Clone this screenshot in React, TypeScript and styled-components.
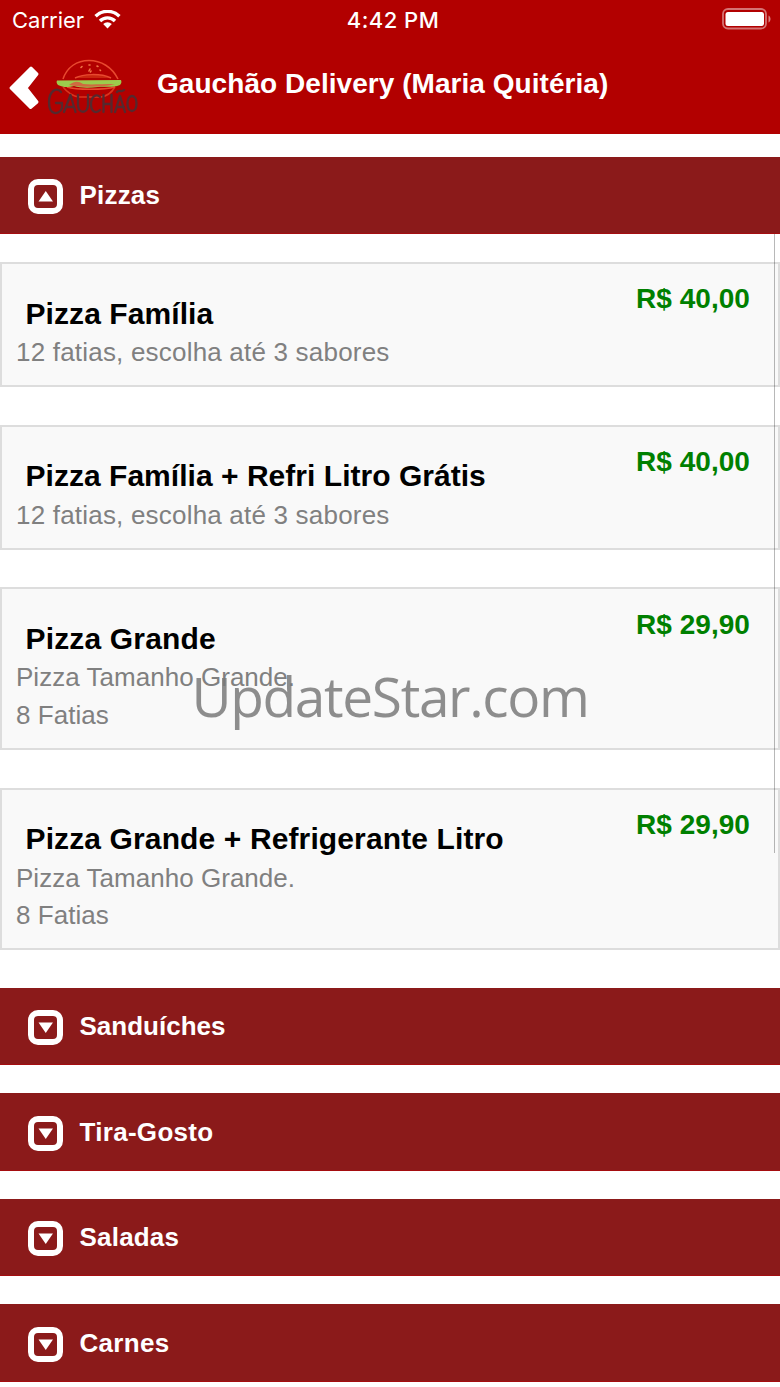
import React from "react";
import styled, { createGlobalStyle } from "styled-components";

const GlobalStyle = createGlobalStyle`
  * { box-sizing: border-box; }
  html, body { margin: 0; background: #fff; }
  body { font-family: "Liberation Sans", Arial, sans-serif; overflow: hidden; }
`;

const Screen = styled.div`
  position: relative;
  width: 780px;
  height: 1387px;
  overflow: hidden;
  background: #fff;
`;

const TopArea = styled.header`
  height: 133.5px;
  background: #b20000;
  color: #fff;
`;

const StatusBar = styled.div`
  display: grid;
  grid-template-columns: 1fr auto 1fr;
  align-items: center;
  height: 40px;
  padding: 0 9px 0 12px;
  font-family: Inter, sans-serif;
  font-size: 22px;
  line-height: 40px;
`;

const Carrier = styled.div`
  display: flex;
  align-items: center;
  gap: 10px;
  margin-top: -1px;
`;

const Clock = styled.div`
  font-weight: 500;
  letter-spacing: 0.45px;
  padding-left: 3px;
`;

const Battery = styled.svg`
  justify-self: end;
  margin-top: -2px;
`;

const NavBar = styled.div`
  display: flex;
  align-items: flex-start;
  height: 93px;
  padding-left: 8px;
`;

const BackIcon = styled.svg`
  margin-top: 24px;
`;

const Logo = styled.svg`
  margin: 16px 0 0 6px;
`;

const Title = styled.h1`
  margin: 24.5px 0 0 16px;
  font-size: 28px;
  line-height: 38px;
  font-weight: 700;
  letter-spacing: 0.05px;
  white-space: nowrap;
`;

const Menu = styled.main`
  display: flex;
  flex-direction: column;
  gap: 28px;
  padding-top: 23px;
`;

const SectionBar = styled.div`
  display: flex;
  align-items: center;
  height: 77.5px;
  padding-left: 28px;
  gap: 16.5px;
  background: #8b1a1a;
  border-bottom: 1px solid #a50d10;
  color: #fff;
`;

const ToggleIcon = styled.svg`
  margin-top: 3.5px;
`;

const SectionName = styled.h2<{ $tracking: number }>`
  margin: 0;
  font-size: 26px;
  line-height: 38px;
  font-weight: 700;
  letter-spacing: ${(p) => p.$tracking}px;
`;

const Items = styled.div`
  display: flex;
  flex-direction: column;
  gap: 37.7px;
  padding-bottom: 9.9px;
`;

const Card = styled.article`
  display: flex;
  justify-content: space-between;
  padding: 29.6px 28px 13.4px 14px;
  border: 2px solid #ddd;
  background: #f9f9f9;
`;

const ItemName = styled.h3<{ $tracking: number }>`
  margin: 0 0 1px 9.5px;
  font-size: 30px;
  line-height: 39.5px;
  font-weight: 700;
  letter-spacing: ${(p) => p.$tracking}px;
  color: #000;
`;

const Description = styled.p<{ $tracking: number }>`
  margin: 0;
  font-size: 26px;
  line-height: 37.5px;
  letter-spacing: ${(p) => p.$tracking}px;
  color: #808080;
  white-space: pre-line;
`;

const Price = styled.div`
  height: 38px;
  margin-top: -13.3px;
  font-size: 28px;
  line-height: 38px;
  font-weight: 700;
  letter-spacing: 0.05px;
  color: #008000;
`;

const ScrollThumb = styled.div`
  position: absolute;
  top: 234px;
  left: 774px;
  width: 1px;
  height: 619px;
  background: rgba(0, 0, 0, 0.28);
`;

const Watermark = styled.div`
  position: absolute;
  top: 658px;
  left: 191.5px;
  font-family: "Open Sans", "Noto Sans", sans-serif;
  font-size: 55px;
  line-height: 76px;
  letter-spacing: -1.35px;
  white-space: nowrap;
  color: rgba(120, 120, 120, 0.84);
`;

const Toggle = ({ open }: { open?: boolean }) => (
  <ToggleIcon width="35" height="35" viewBox="0 0 35 35">
    <rect x="3" y="3" width="29" height="29" rx="7" fill="none" stroke="#fff" strokeWidth="6" />
    <path d={open ? "M10.500 22.500h14.500l-7.250-10.500z" : "M10.500 12.500h14.500l-7.250 10.500z"} fill="#fff" />
  </ToggleIcon>
);

const Section = ({ name, tracking, open }: { name: string; tracking: number; open?: boolean }) => (
  <SectionBar>
    <Toggle open={open} />
    <SectionName $tracking={tracking}>{name}</SectionName>
  </SectionBar>
);

const items = [
  { name: "Pizza Família", tracking: 0.08, text: "12 fatias, escolha até 3 sabores", textTracking: 0.2, price: "R$ 40,00" },
  { name: "Pizza Família + Refri Litro Grátis", tracking: 0.03, text: "12 fatias, escolha até 3 sabores", textTracking: 0.2, price: "R$ 40,00" },
  { name: "Pizza Grande", tracking: 0.16, text: "Pizza Tamanho Grande.\n8 Fatias", textTracking: 0.03, price: "R$ 29,90" },
  { name: "Pizza Grande + Refrigerante Litro", tracking: 0.12, text: "Pizza Tamanho Grande.\n8 Fatias", textTracking: 0.03, price: "R$ 29,90" },
];

const closedSections = [
  { name: "Sanduíches", tracking: 0 },
  { name: "Tira-Gosto", tracking: 0.3 },
  { name: "Saladas", tracking: 0.2 },
  { name: "Carnes", tracking: 0.3 },
];

export default function App() {
  return (
    <Screen>
      <GlobalStyle />
      <TopArea>
        <StatusBar>
          <Carrier>
            <span>Carrier</span>
            <svg width="27" height="19" viewBox="0 0 27 19" fill="none" stroke="#fff" strokeWidth="3.4">
              <path d="M1.6 6.200a17 17 0 0 1 23.800 0" />
              <path d="M6 11a10.600 10.600 0 0 1 15 0" />
              <path d="M9.200 14a6.200 6.200 0 0 1 8.600 0L13.500 18.500z" fill="#fff" stroke="none" />
            </svg>
          </Carrier>
          <Clock>4:42 PM</Clock>
          <Battery width="49" height="22" viewBox="0 0 49 22">
            <rect x="1" y="1" width="43" height="19.500" rx="5" fill="none" stroke="#fff" strokeOpacity=".45" strokeWidth="1.800" />
            <rect x="3.500" y="4" width="38.500" height="14" rx="2.500" fill="#fff" />
            <path d="M46.500 7.500c2.700 1.300 2.700 5.500 0 7z" fill="#fff" fillOpacity=".5" />
          </Battery>
        </StatusBar>
        <NavBar>
          <BackIcon width="33" height="48" viewBox="0 0 33 48">
            <path d="M23 4 29 10 18 24 29 38 22.500 43.500 3 24z" fill="#fff" stroke="#fff" strokeWidth="3" strokeLinejoin="round" />
          </BackIcon>
          <Logo width="94" height="62" viewBox="0 0 94 62">
            <g fill="none" stroke="#e8492f" strokeWidth="1.500">
              <path d="M16 23C20 11 30 4.500 42 4.500S65 11 71 23" />
              <path d="M28 22c8-4 25-5 36 0" fill="#c9260f" />
              <path d="M16 31c4 5 9 9 16 10h22c7-1 11-5 14-10" stroke="#d9361f" />
              <path d="M20 31c9 3 37 3 48 0" />
            </g>
            <path d="M10 24.500 74 24c1 2 0 4-1 5-8 3-14 1-22 2-9 1-18 1-24-1-6 2-12 1-16-1-1-1-2-3-1-4.500z" fill="#9ccb4c" />
            <path d="M22 29c6-4 9-4 14-1 8 1 18 0 32 0-9 3-34 4-46 1z" fill="#cf6a40" />
            <g fill="none" stroke="#ef7446" strokeWidth="1.600" strokeLinecap="round">
              <path d="M34 11.500l1-1M43 13l-1 2M42 9l1 0M50 10l1 .5M44 15l-.5 1M53 14l.5 .5" />
            </g>
            <g fill="none" stroke="#55292e" strokeWidth="2.300" strokeLinecap="round" strokeLinejoin="round">
              <path d="M14 36C9 30 2 36 2 46c0 14 10 13 13 6v-5h-6" />
              <path d="M17 56l6.500-17 5 17M19 51h8" />
              <path d="M31 39v10c0 9 10 9 10 0V39" />
              <path d="M53 41c-4-4-9 0-9 7 0 8 5 10 9 6" />
              <path d="M56.500 39v17M64.500 39v17M56.500 48h8" />
              <path d="M68 56l5-16 5 16M70 51h7M70 36c2-3 4 1 7-2" />
              <path d="M85 40c-6 0-6 15 0 15s6-15 0-15z" />
            </g>
          </Logo>
          <Title>Gauchão Delivery (Maria Quitéria)</Title>
        </NavBar>
      </TopArea>
      <Menu>
        <Section name="Pizzas" tracking={0.2} open />
        <Items>
          {items.map((item) => (
            <Card key={item.name}>
              <div>
                <ItemName $tracking={item.tracking}>{item.name}</ItemName>
                <Description $tracking={item.textTracking}>{item.text}</Description>
              </div>
              <Price>{item.price}</Price>
            </Card>
          ))}
        </Items>
        {closedSections.map((section) => (
          <Section key={section.name} {...section} />
        ))}
      </Menu>
      <ScrollThumb />
      <Watermark>UpdateStar.com</Watermark>
    </Screen>
  );
}
